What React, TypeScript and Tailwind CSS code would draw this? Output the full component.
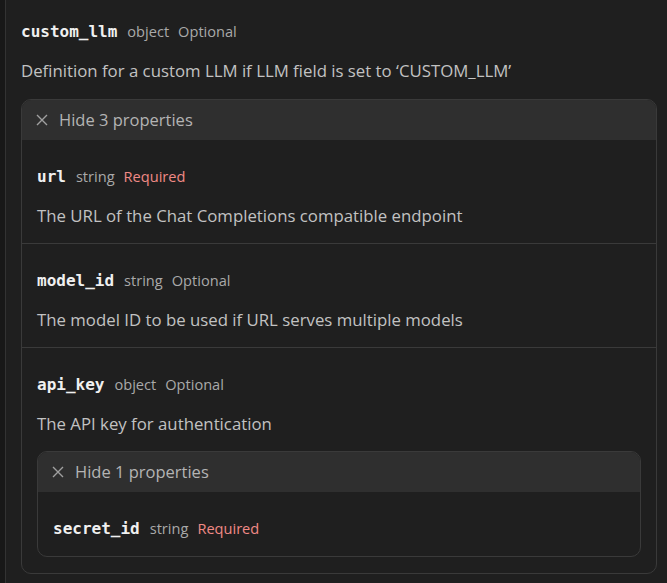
const mono = "font-['DejaVu_Sans_Mono',monospace]";

type Prop = {
  name: string;
  type: string;
  required?: boolean;
  desc?: string;
  children?: Prop[];
};

const props: Prop[] = [
  { name: "url", type: "string", required: true, desc: "The URL of the Chat Completions compatible endpoint" },
  { name: "model_id", type: "string", desc: "The model ID to be used if URL serves multiple models" },
  {
    name: "api_key",
    type: "object",
    desc: "The API key for authentication",
    children: [{ name: "secret_id", type: "string", required: true }],
  },
];

const XIcon = () => (
  <svg width="12" height="12" viewBox="0 0 12 12" className="shrink-0">
    <path d="M1 1L11 11M11 1L1 11" stroke="#a0a0a0" strokeWidth="1.4" />
  </svg>
);

const NameRow = ({ p }: { p: Prop }) => (
  <div className="flex items-baseline h-6 leading-6">
    <span className={`${mono} font-bold text-[16px] text-[#f0f0f0]`}>{p.name}</span>
    <span className="ml-[10px] text-[14.6px] text-[#a9a9a9]">{p.type}</span>
    {p.required ? (
      <span className="ml-[9px] text-[14.6px] text-[#f08a86]">Required</span>
    ) : (
      <span className="ml-[9px] text-[14.6px] text-[#a9a9a9]">Optional</span>
    )}
  </div>
);

const PropBox = ({ items }: { items: Prop[] }) => (
  <div className="rounded-[10px] border border-[#3a3a3a] overflow-hidden">
    <div className="h-10 bg-[#2f2f2f] flex items-center gap-[11px] pl-[14px] text-[16.5px] text-[#b4b4b4]">
      <XIcon />
      <span>Hide {items.length} properties</span>
    </div>
    {items.map((p, i) => (
      <div
        key={p.name}
        className={`px-[15px] pt-6 ${p.desc && !p.children ? "pb-[15px]" : "pb-4"} ${i > 0 ? "border-t border-[#3a3a3a]" : ""}`}
      >
        <NameRow p={p} />
        {p.desc && <p className="mt-4 h-6 leading-6 text-[16.8px] text-[#c2c2c2]">{p.desc}</p>}
        {p.children && (
          <div className="mt-[15px]">
            <PropBox items={p.children} />
          </div>
        )}
      </div>
    ))}
  </div>
);

export default function App() {
  return (
    <div className="w-[667px] h-[583px] bg-[#181818] font-['Open_Sans',sans-serif] overflow-hidden">
      <div className="ml-[5px] h-full border-l border-[#333] bg-[#1f1f1f] pl-[15px] pr-[10px] pt-[19px]">
        <NameRow p={{ name: "custom_llm", type: "object" }} />
        <p className="mt-4 h-6 leading-6 text-[16.8px] text-[#c2c2c2]">
          Definition for a custom LLM if LLM field is set to ‘CUSTOM_LLM’
        </p>
        <div className="mt-4">
          <PropBox items={props} />
        </div>
      </div>
    </div>
  );
}
